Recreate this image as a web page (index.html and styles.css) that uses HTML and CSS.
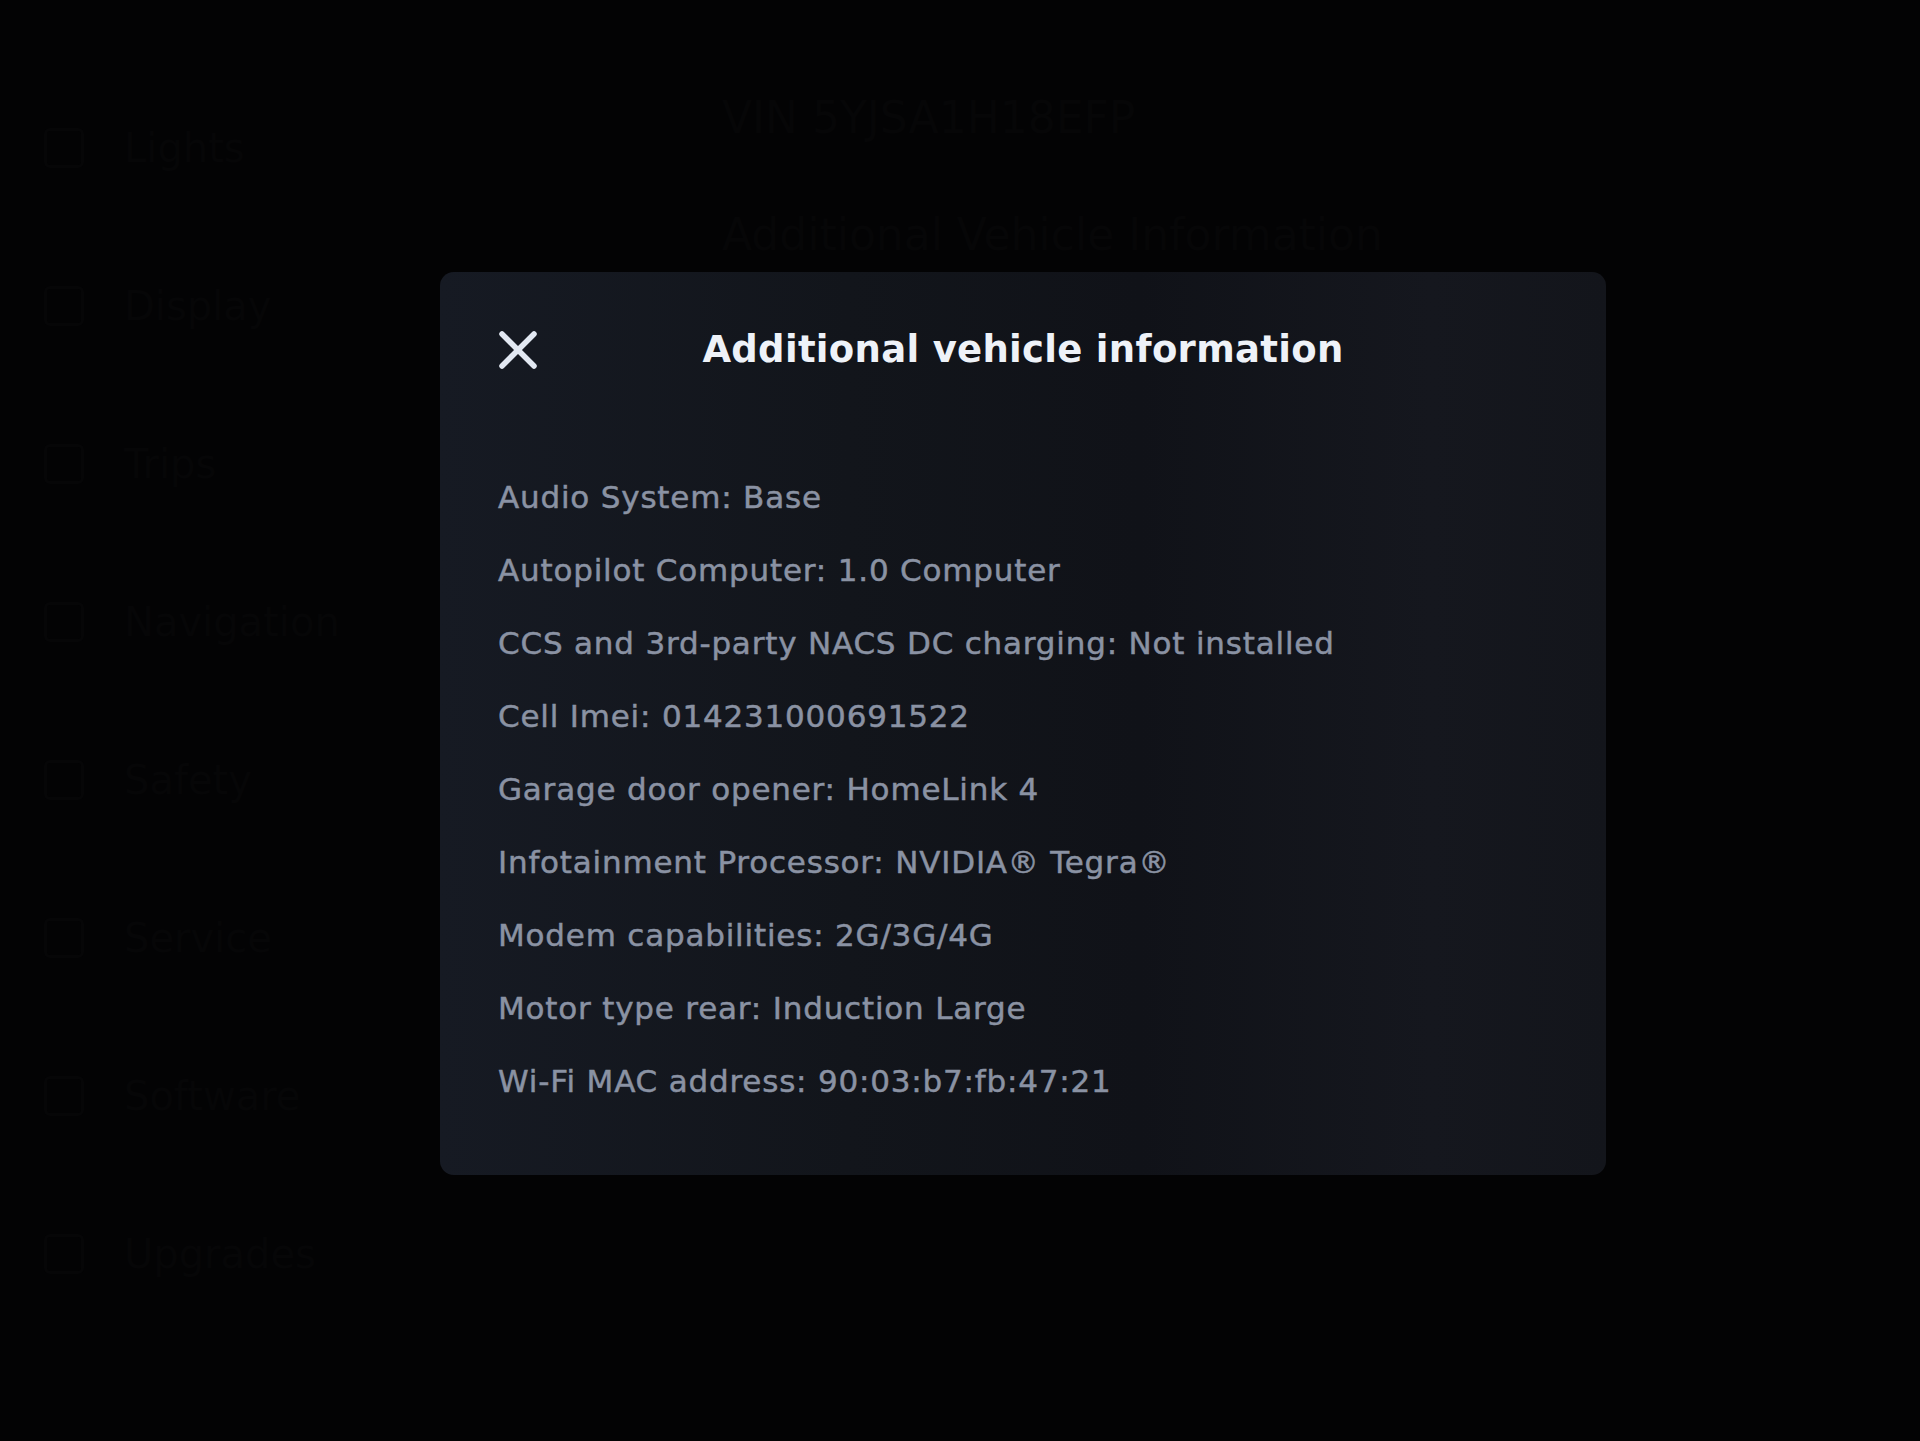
FILE: index.html
```html
<!DOCTYPE html>
<html lang="en">
<head>
  <meta charset="UTF-8">
  <meta name="viewport" content="width=device-width, initial-scale=1.0">
  <title>Software - Additional vehicle information</title>
  <link rel="stylesheet" href="styles.css">
</head>
<body>

<div class="screen">
  <!-- Menu laterale (oscurato dietro la finestra) -->
  <ul class="side-menu">
    <li><span class="menu-icon"></span>Lights</li>
    <li><span class="menu-icon"></span>Display</li>
    <li><span class="menu-icon"></span>Trips</li>
    <li><span class="menu-icon"></span>Navigation</li>
    <li><span class="menu-icon"></span>Safety</li>
    <li><span class="menu-icon"></span>Service</li>
    <li><span class="menu-icon"></span>Software</li>
    <li><span class="menu-icon"></span>Upgrades</li>
  </ul>

  <div class="main-page">
    <p class="page-vin">VIN 5YJSA1H18EFP</p>
    <p class="page-link">Additional Vehicle Information</p>
  </div>
</div>

<div class="modal">
  <div class="modal-header">
    <button class="close-btn" aria-label="Close">
      <svg viewBox="0 0 40 40" width="40" height="40">
        <path d="M4 4 L36 36 M36 4 L4 36" stroke="#e2e8f2" stroke-width="5.5" stroke-linecap="round" fill="none"/>
      </svg>
    </button>
    <h2>Additional vehicle information</h2>
    <span class="spacer"></span>
  </div>

  <ul class="info-list">
    <li>Audio System: Base</li>
    <li>Autopilot Computer: 1.0 Computer</li>
    <li>CCS and 3rd-party NACS DC charging: Not installed</li>
    <li>Cell Imei: 014231000691522</li>
    <li>Garage door opener: HomeLink 4</li>
    <li>Infotainment Processor: NVIDIA® Tegra®</li>
    <li>Modem capabilities: 2G/3G/4G</li>
    <li>Motor type rear: Induction Large</li>
    <li>Wi-Fi MAC address: 90:03:b7:fb:47:21</li>
  </ul>
</div>

</body>
</html>
```

FILE: styles.css
```css
html, body {
  margin: 0;
  height: 100%;
}

body {
  font-family: 'DejaVu Sans', 'Liberation Sans', sans-serif;
  background-color: #030304;
  overflow: hidden;
}

.screen {
  display: flex;
  height: 100%;
}

/* contenuto di sfondo, quasi invisibile */
.side-menu {
  list-style: none;
  margin: 0;
  padding: 148px 0 0 44px;
  width: 420px;
  box-sizing: border-box;
}

.side-menu li {
  display: flex;
  align-items: center;
  gap: 40px;
  height: 158px;
  margin-top: -79px;
  margin-bottom: 79px;
  font-size: 40px;
  color: #060607;
}

.menu-icon {
  width: 34px;
  height: 34px;
  border: 3px solid #060607;
  border-radius: 6px;
}

.main-page {
  padding: 92px 0 0 302px;
}

.main-page p {
  margin: 0;
  font-size: 44px;
  color: #060607;
}

.page-link {
  margin-top: 66px !important;
}

/* finestra informazioni */
.modal {
  position: absolute;
  left: 440px;
  top: 272px;
  width: 1166px;
  height: 903px;
  box-sizing: border-box;
  padding: 56px 58px 0 58px;
  border-radius: 14px;
  background: linear-gradient(90deg, #161a23 0%, #12151b 35%, #101218 60%, #15171e 85%, #13151b 100%);
}

.modal-header {
  display: grid;
  grid-template-columns: 40px 1fr 40px;
  align-items: center;
  height: 40px;
}

.close-btn {
  background: none;
  border: none;
  padding: 0;
  width: 40px;
  height: 40px;
  cursor: pointer;
}

.close-btn svg {
  display: block;
}

.modal-header h2 {
  margin: 0;
  text-align: center;
  font-size: 37px;
  font-weight: bold;
  color: #eef2f8;
  letter-spacing: 0.3px;
}

.info-list {
  list-style: none;
  margin: 0;
  padding: 0;
  margin-top: 93px;
}

.info-list li {
  height: 73px;
  line-height: 73px;
  font-size: 31px;
  letter-spacing: 0.8px;
  color: #8a92a3;
  -webkit-text-stroke: 0.5px #8a92a3;
  white-space: nowrap;
}
```
